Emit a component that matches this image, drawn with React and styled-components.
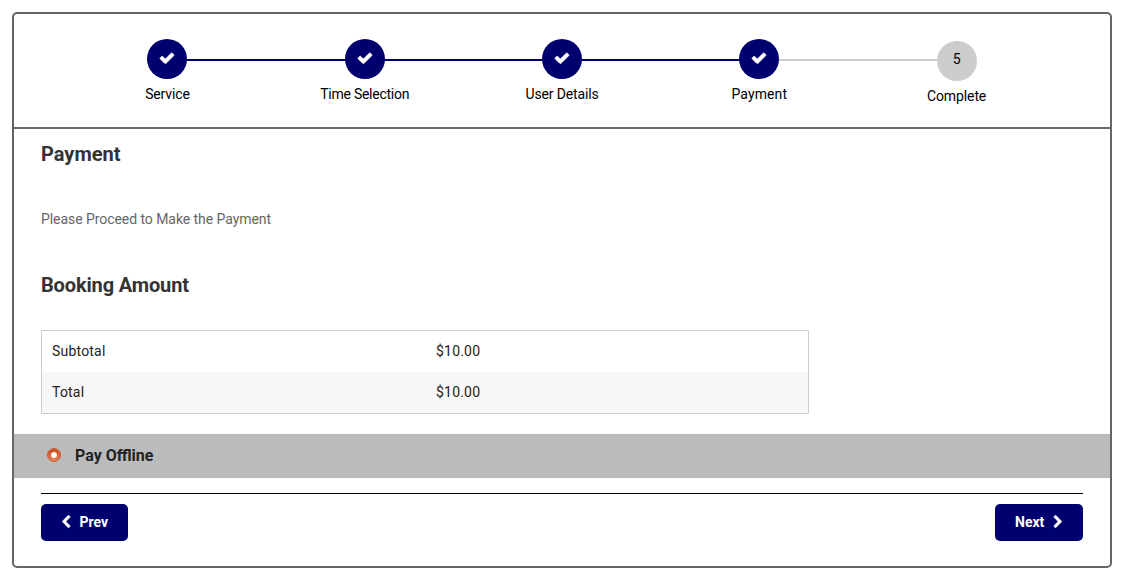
import React from "react";
import styled, { createGlobalStyle } from "styled-components";

const GlobalStyle = createGlobalStyle`
  *, *::before, *::after { box-sizing: border-box; }
  body {
    margin: 0;
    background: #fff;
    color: #222;
    font: 14px/20px Roboto, "Liberation Sans", sans-serif;
  }
`;

const Card = styled.main`
  margin: 12px;
  height: 556px;
  border: 2px solid #666;
  border-radius: 5px;
  overflow: hidden;
`;

const Steps = styled.ol`
  list-style: none;
  margin: 0;
  padding: 25px 5% 0;
  height: 115px;
  display: flex;
  border-bottom: 2px solid #666;
`;

const Step = styled.li`
  flex: 1 1 0;
  position: relative;
  display: flex;
  flex-direction: column;
  align-items: center;
  padding-top: ${(p) => (p.$done ? 0 : 2)}px;
  color: #000;
  letter-spacing: ${(p) => p.$tracking}px;

  &:not(:last-child)::after {
    content: "";
    position: absolute;
    top: 20px;
    left: calc(50% + 19px);
    width: calc(100% - 38px);
    height: 2px;
    background: ${(p) => (p.$lineDone ? "#00006f" : "#ccc")};
  }
`;

const Circle = styled.span`
  position: relative;
  z-index: 1;
  width: 40px;
  height: 40px;
  margin-bottom: 5px;
  padding-bottom: ${(p) => (p.$done ? 2 : 4)}px;
  border-radius: 50%;
  display: flex;
  align-items: center;
  justify-content: center;
  background: ${(p) => (p.$done ? "#00006f" : "#ccc")};
  color: ${(p) => (p.$done ? "#fff" : "#000")};
`;

const Glyph = styled.svg`
  display: block;
  flex: none;
  width: ${(p) => p.$size}px;
  height: ${(p) => p.$size}px;
  fill: currentColor;
  stroke: currentColor;
  stroke-width: ${(p) => p.$stroke || 0};
`;

const Content = styled.section`
  padding: 0 27px;
`;

const Heading = styled.h2`
  margin: 0;
  padding-top: ${(p) => p.$top}px;
  font-size: 20px;
  line-height: 24px;
  font-weight: 700;
  letter-spacing: ${(p) => p.$tracking || 0}px;
  color: #333;
`;

const Note = styled.p`
  margin: 43px 0 0;
  letter-spacing: -0.06px;
  color: #666;
`;

const Amounts = styled.table`
  width: 768px;
  margin-top: 33px;
  border: 1px solid #ccc;
  border-spacing: 0;
  table-layout: fixed;
  letter-spacing: 0.2px;

  tr:nth-child(even) { background: #f7f7f7; }
`;

const Cell = styled.td`
  height: 41px;
  padding: 0 10px 2px;

  & + & { padding-left: 11px; }
`;

const Method = styled.label`
  height: 44px;
  margin-top: 20px;
  padding: 0 33px 1px;
  display: flex;
  align-items: center;
  gap: 14px;
  background: #bbb;
  font-size: 16px;
  font-weight: 700;
`;

const Radio = styled.span`
  width: 14px;
  height: 14px;
  margin-bottom: 1px;
  border-radius: 50%;
  border: 1px solid #c25a32;
  background: radial-gradient(circle, #fff 0 2.3px, rgba(255, 255, 255, 0) 3.5px),
    linear-gradient(#cb4d1f, #e2855f);
`;

const Actions = styled.footer`
  margin: 15px 27px 0;
  padding-top: 10px;
  border-top: 1px solid #000;
  display: flex;
  justify-content: space-between;
`;

const Button = styled.button`
  width: ${(p) => p.$width}px;
  height: 37px;
  padding: 0 18px 1px;
  border: 0;
  border-radius: 5px;
  display: flex;
  align-items: center;
  justify-content: space-between;
  background: #00006f;
  color: #fff;
  font: 700 14px/20px Roboto, "Liberation Sans", sans-serif;

  span:first-child { margin-left: 2px; }
  span:last-child { margin-right: 2px; }
`;

const CHECK =
  "M1671 566q0 40-28 68l-724 724-136 136q-28 28-68 28t-68-28l-136-136-362-362q-28-28-28-68t28-68l136-136q28-28 68-28t68 28l294 295 656-657q28-28 68-28t68 28l136 136q28 28 28 68z";
const LEFT =
  "M1427 301l-531 531 531 531q19 19 19 45t-19 45l-166 166q-19 19-45 19t-45-19l-742-742q-19-19-19-45t19-45l742-742q19-19 45-19t45 19l166 166q19 19 19 45t-19 45z";
const RIGHT =
  "M1363 877l-742 742q-19 19-45 19t-45-19l-166-166q-19-19-19-45t19-45l531-531-531-531q-19-19-19-45t19-45l166-166q19-19 45-19t45 19l742 742q19 19 19 45t-19 45z";

const Icon = ({ path, size, stroke }) => (
  <Glyph $size={size} $stroke={stroke} viewBox="0 0 1792 1792" aria-hidden="true">
    <path d={path} />
  </Glyph>
);

const steps = [
  { name: "Service", tracking: -0.15 },
  { name: "Time Selection", tracking: -0.25 },
  { name: "User Details", tracking: -0.15 },
  { name: "Payment", tracking: 0.1 },
  { name: "Complete", tracking: -0.1 },
];
const current = 4;
const amounts = [
  ["Subtotal", "$10.00"],
  ["Total", "$10.00"],
];

export default function App() {
  return (
    <>
      <GlobalStyle />
      <Card>
        <Steps>
          {steps.map(({ name, tracking }, i) => (
            <Step
              key={name}
              $done={i < current}
              $lineDone={i < current - 1}
              $tracking={tracking}
            >
              <Circle $done={i < current}>
                {i < current ? <Icon path={CHECK} size={16} stroke={90} /> : i + 1}
              </Circle>
              {name}
            </Step>
          ))}
        </Steps>
        <Content>
          <Heading $top={13}>Payment</Heading>
          <Note>Please Proceed to Make the Payment</Note>
          <Heading $top={44} $tracking={-0.14}>
            Booking Amount
          </Heading>
          <Amounts>
            <tbody>
              {amounts.map(([label, value]) => (
                <tr key={label}>
                  <Cell>{label}</Cell>
                  <Cell>{value}</Cell>
                </tr>
              ))}
            </tbody>
          </Amounts>
        </Content>
        <Method>
          <Radio role="radio" aria-checked="true" />
          Pay Offline
        </Method>
        <Actions>
          <Button $width={87}>
            <Icon path={LEFT} size={14} stroke={50} />
            <span>Prev</span>
          </Button>
          <Button $width={88}>
            <span>Next</span>
            <Icon path={RIGHT} size={14} stroke={50} />
          </Button>
        </Actions>
      </Card>
    </>
  );
}
